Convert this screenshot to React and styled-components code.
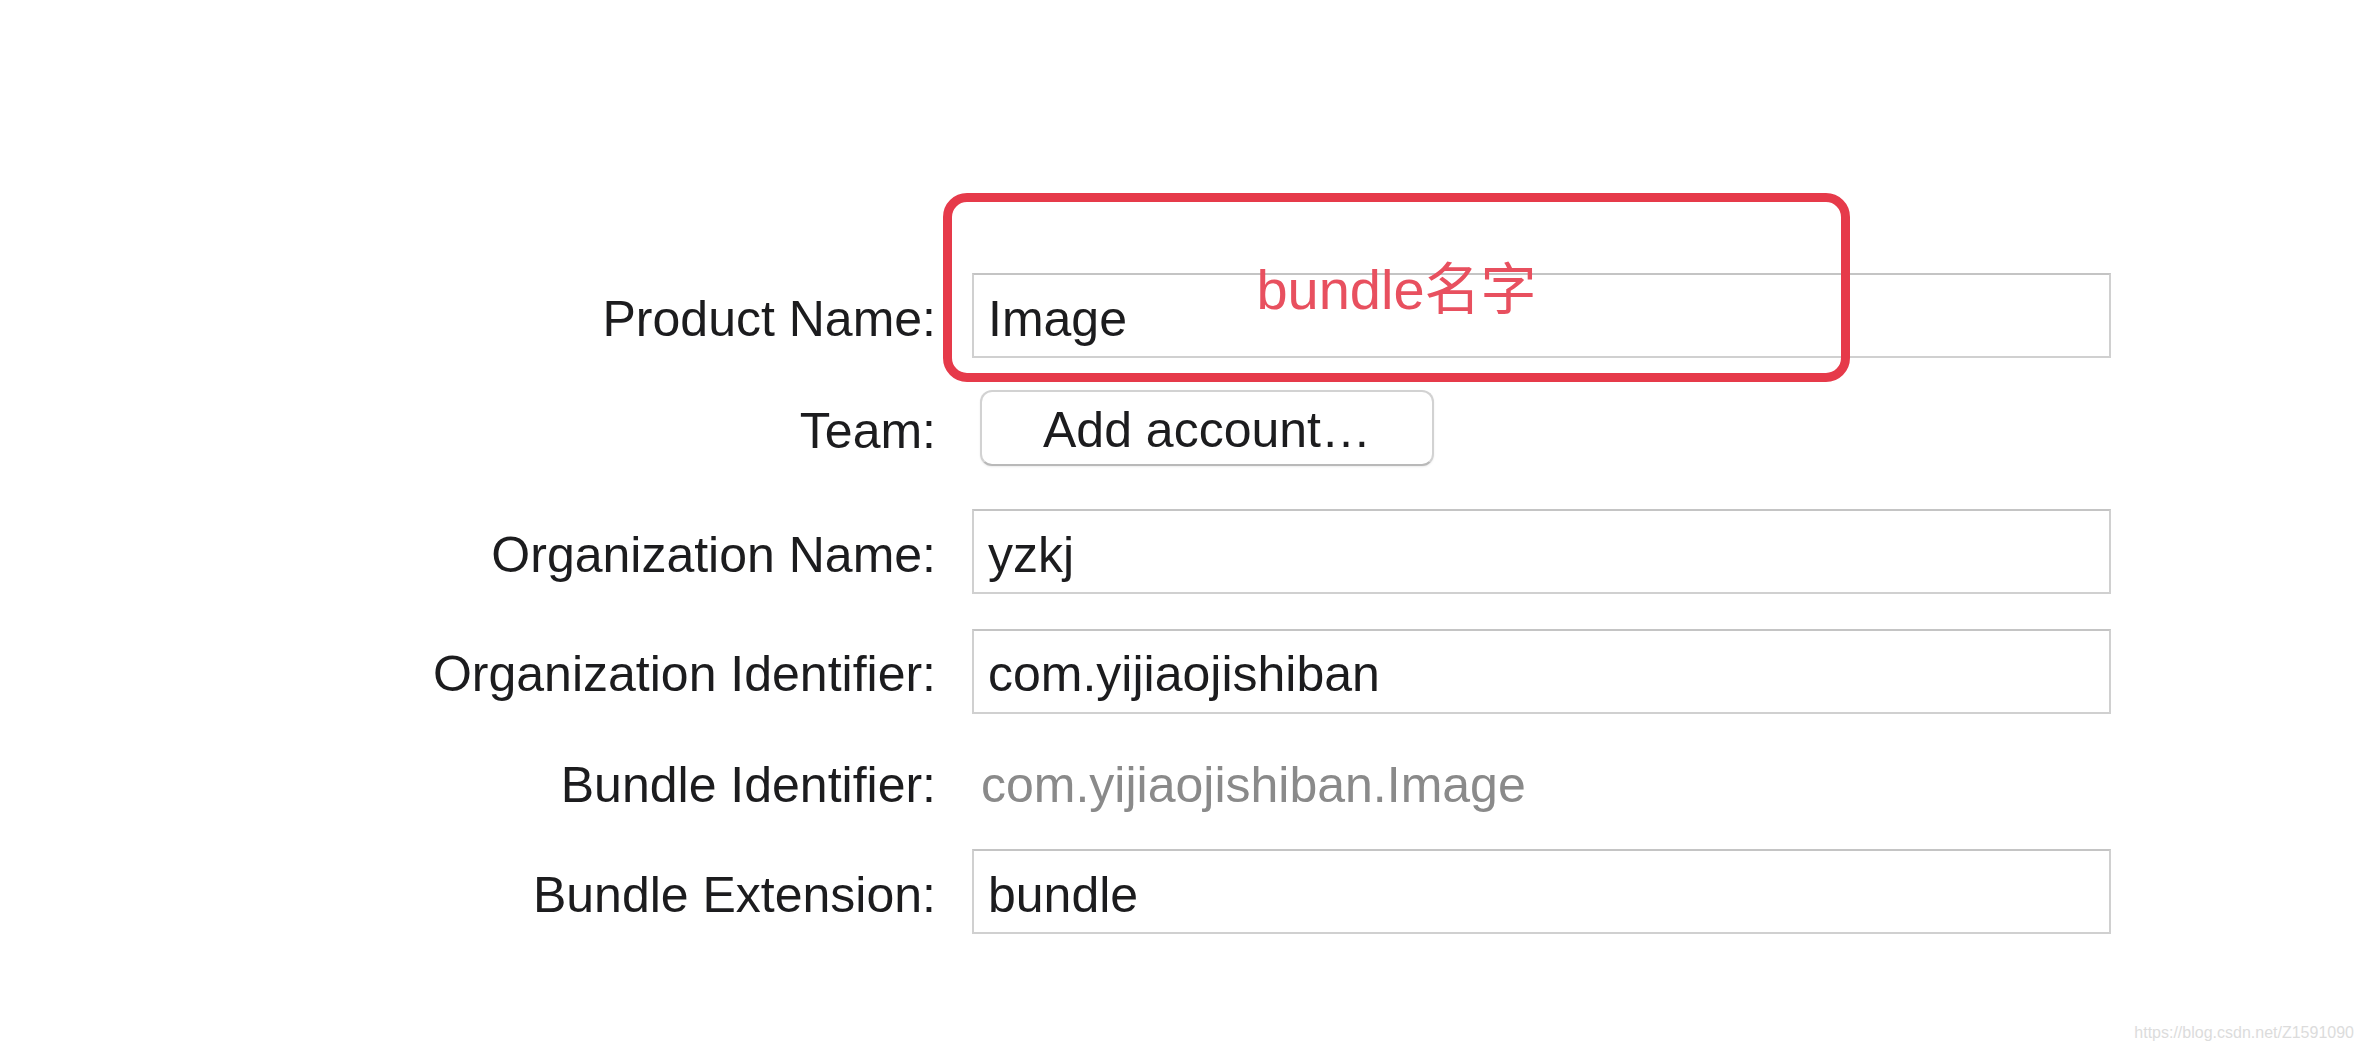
import React from "react";
import styled, { createGlobalStyle } from "styled-components";

const GlobalStyle = createGlobalStyle`
  html, body {
    margin: 0;
    padding: 0;
    background: #ffffff;
  }
  body {
    font-family: "Liberation Sans", Arial, "Noto Sans CJK SC", sans-serif;
  }
`;

const Page = styled.div`
  position: relative;
  width: 2364px;
  height: 1052px;
  overflow: hidden;
  background: #ffffff;
`;

const Form = styled.div`
  display: flex;
  flex-direction: column;
  padding-top: 259px;
`;

const Row = styled.div`
  display: grid;
  grid-template-columns: 936px 1139px;
  column-gap: 36px;
  align-items: center;
  height: ${(p) => p.$h}px;
`;

const Label = styled.div`
  padding-top: 6px;
  text-align: right;
  font-size: 50px;
  line-height: 1;
  color: #1c1c1e;
  white-space: nowrap;
`;

const Field = styled.div`
  box-sizing: border-box;
  height: 85px;
  display: flex;
  align-items: center;
  padding: 6px 0 0 14px;
  border: 2px solid #d0d0d0;
  border-top-color: #c4c4c4;
  background: #ffffff;
  font-size: 50px;
  color: #1c1c1e;
  white-space: nowrap;
`;

const StaticValue = styled.div`
  padding: 6px 0 0 9px;
  font-size: 50px;
  line-height: 1;
  color: #8a8a8a;
  white-space: nowrap;
`;

const PushButton = styled.div`
  box-sizing: border-box;
  margin-left: 8px;
  width: 454px;
  height: 76px;
  display: flex;
  align-items: center;
  justify-content: center;
  padding-top: 4px;
  border: 2px solid #d2d2d2;
  border-bottom-color: #b9b9b9;
  border-radius: 12px;
  background: #ffffff;
  box-shadow: 0 1px 2px rgba(0, 0, 0, 0.08);
  font-size: 50px;
  color: #1c1c1e;
  white-space: nowrap;
`;

const Annotation = styled.div`
  position: absolute;
  left: 943px;
  top: 193px;
  width: 907px;
  height: 189px;
  box-sizing: border-box;
  border: 9px solid #e63a4a;
  border-radius: 24px;
  display: flex;
  align-items: center;
  justify-content: center;
`;

const AnnotationText = styled.span`
  font-family: "Liberation Sans", Arial, "Noto Sans CJK SC", sans-serif;
  font-size: 56px;
  line-height: 1;
  color: #e8505f;
  white-space: nowrap;
  margin-top: 4px;
`;

const Watermark = styled.div`
  position: absolute;
  right: 10px;
  bottom: 10px;
  font-size: 16px;
  color: #dcdcdc;
  white-space: nowrap;
`;

const rows = [
  { label: "Product Name:", kind: "field", value: "Image", h: 113 },
  { label: "Team:", kind: "button", value: "Add account…", h: 112 },
  { label: "Organization Name:", kind: "field", value: "yzkj", h: 135 },
  { label: "Organization Identifier:", kind: "field", value: "com.yijiaojishiban", h: 104 },
  { label: "Bundle Identifier:", kind: "static", value: "com.yijiaojishiban.Image", h: 118 },
  { label: "Bundle Extension:", kind: "field", value: "bundle", h: 101 },
];

function Control({ kind, value }) {
  if (kind === "button") return <div><PushButton>{value}</PushButton></div>;
  if (kind === "static") return <StaticValue>{value}</StaticValue>;
  return <Field>{value}</Field>;
}

export default function App() {
  return (
    <>
      <GlobalStyle />
      <Page>
        <Form>
          {rows.map((r) => (
            <Row key={r.label} $h={r.h}>
              <Label>{r.label}</Label>
              <Control kind={r.kind} value={r.value} />
            </Row>
          ))}
        </Form>
        <Annotation>
          <AnnotationText>bundle名字</AnnotationText>
        </Annotation>
        <Watermark>https://blog.csdn.net/Z1591090</Watermark>
      </Page>
    </>
  );
}
